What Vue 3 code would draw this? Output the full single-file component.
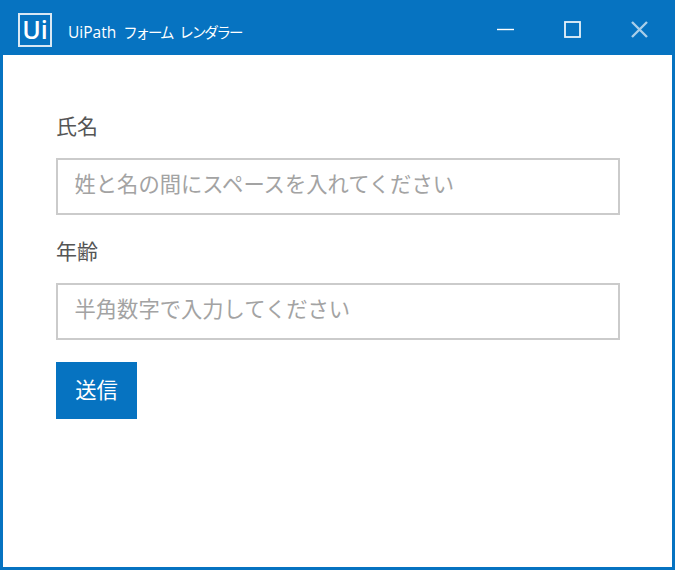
<script setup>
const fields = [
  { label: '氏名', placeholder: '姓と名の間にスペースを入れてください' },
  { label: '年齢', placeholder: '半角数字で入力してください' },
]
</script>

<template>
  <div class="window">
    <header class="titlebar">
      <div class="logo">Ui</div>
      <div class="title">
        <span class="title-latin">UiPath</span>
        <span class="title-ja">フォーム</span>
        <span class="title-ja">レンダラー</span>
      </div>
      <div class="controls">
        <svg class="ctl" width="17" height="17" viewBox="0 0 17 17"><path d="M0 8.5H17" stroke="#fff" stroke-width="1.4" fill="none"/></svg>
        <svg class="ctl" width="17" height="17" viewBox="0 0 17 17"><rect x="1" y="1" width="15" height="15" stroke="#fff" stroke-opacity=".9" stroke-width="1.8" fill="none"/></svg>
        <svg class="ctl" width="17" height="17" viewBox="0 0 17 17"><path d="M1 1L16 16M16 1L1 16" stroke="#fff" stroke-opacity=".65" stroke-width="2.4" fill="none"/></svg>
      </div>
    </header>
    <form class="form" @submit.prevent>
      <div v-for="f in fields" :key="f.label" class="field">
        <label class="label">{{ f.label }}</label>
        <input class="input" type="text" :placeholder="f.placeholder" />
      </div>
      <button class="submit" type="submit">送信</button>
    </form>
  </div>
</template>

<style scoped>
.window {
  box-sizing: border-box;
  width: 675px;
  height: 570px;
  display: flex;
  flex-direction: column;
  border: 3px solid #0673c1;
  border-top: 0;
  background: #fff;
  font-family: "Noto Sans CJK JP", "Liberation Sans", sans-serif;
}
.titlebar {
  height: 55px;
  margin: 0 -3px;
  flex: none;
  display: flex;
  align-items: center;
  background: #0673c1;
  color: #fff;
  padding-left: 18px;
}
.logo {
  box-sizing: border-box;
  width: 34px;
  height: 34px;
  margin-top: 4px;
  border: 2px solid #d8e8f4;
  font: 600 25px/29px "Open Sans", "Liberation Sans", sans-serif;
  text-align: center;
}
.title {
  margin: 9px 0 0 16px;
  display: flex;
  align-items: baseline;
  gap: 7px;
  line-height: 20px;
  white-space: nowrap;
}
.title-latin {
  font-family: "Open Sans", "Liberation Sans", sans-serif;
  font-size: 15.5px;
}
.title-ja {
  font-size: 14.5px;
  letter-spacing: -2.1px;
}
.controls {
  margin: 4px 27px 0 auto;
  display: flex;
  gap: 50px;
}
.form {
  padding: 57px 52px 0 53px;
  display: flex;
  flex-direction: column;
}
.field { display: flex; flex-direction: column; }
.label {
  height: 30px;
  font-family: "Liberation Serif", "Noto Sans CJK JP", serif;
  font-size: 21px;
  line-height: 30px;
  color: #555;
  margin-bottom: 16px;
}
.input {
  box-sizing: border-box;
  width: 564px;
  height: 57px;
  margin-bottom: 22px;
  border: 2.5px solid #cbcbcb;
  padding: 0 16.5px 8px;
  outline: none;
  font: inherit;
  font-size: 21.3px;
  background: #fff;
  color: #333;
}
.input::placeholder { color: #a3a3a3; opacity: 1; }
.submit {
  width: 81px;
  height: 57px;
  border: 0;
  padding: 0 0 4px;
  background: #0673c1;
  color: #fff;
  font: inherit;
  font-size: 21.3px;
}
</style>
